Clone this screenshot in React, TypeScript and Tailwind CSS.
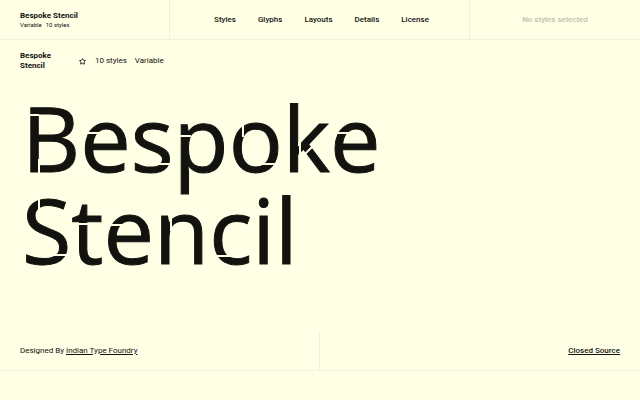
import { Star } from "lucide-react";

const NAV_LINKS = ["Styles", "Glyphs", "Layouts", "Details", "License"];

// Background-coloured strokes that break the letters of each line
const SPECIMEN = [
    {
        text: "Bespoke",
        cuts: [
            "M6 24H17",
            "M17 68V84",
            "M62 42H77",
            "M128 73H150",
            "M156 45H169",
            "M221 28V46",
            "M232 73H258",
            "M278 30V84",
            "M278 68L292 54",
            "M312 42H327",
        ],
    },
    {
        text: "Stencil",
        cuts: ["M17 11V32", "M26 72H49", "M54 41H72", "M85 42H100", "M149 28V48", "M190 73H212"],
    },
];

export default function App() {
    return (
        <main className="flex min-h-screen flex-col bg-[#ffffe5] font-['Roboto','Liberation_Sans',sans-serif] text-[8px] leading-[10px] text-[#12120f]">
            <header className="grid h-10 grid-cols-[17fr_30fr_17fr] border-b border-[#f1f1d9]">
                <div className="border-r border-[#f1f1d9] px-5 pt-[11px]">
                    <p className="font-bold">Bespoke Stencil</p>
                    <p className="flex gap-1 text-[6px] leading-[8px]">
                        <span>Variable</span>
                        <span>10 styles</span>
                    </p>
                </div>
                <nav className="flex items-center justify-center gap-[22px] border-r border-[#f1f1d9] pt-px pl-1 font-medium">
                    {NAV_LINKS.map((label) => (
                        <a key={label} href={`#${label.toLowerCase()}`}>
                            {label}
                        </a>
                    ))}
                </nav>
                <div className="flex items-center justify-center pt-px font-medium text-[#c0c0ab]">
                    No styles selected
                </div>
            </header>

            <section className="flex items-center px-5 pt-[11px]">
                <p className="w-[59px] font-bold">
                    Bespoke
                    <br />
                    Stencil
                </p>
                <button type="button" aria-label="Add to favourites">
                    <Star className="h-[7px] w-[7px]" strokeWidth={3} />
                </button>
                <span className="ml-[9px]">10 styles</span>
                <span className="ml-2">Variable</span>
            </section>

            <h1 className="px-[22px] pt-5 font-['Open_Sans','Noto_Sans',sans-serif] text-[90px] leading-[92px] font-medium [-webkit-text-stroke:1px_currentColor]">
                {SPECIMEN.map((line) => (
                    <span key={line.text} className="relative block">
                        {line.text}
                        <svg
                            aria-hidden="true"
                            viewBox="0 0 368 92"
                            className="absolute top-0 left-0 h-[92px] w-[368px] fill-none stroke-[#ffffe5] stroke-2"
                        >
                            {line.cuts.map((d) => (
                                <path key={d} d={d} />
                            ))}
                        </svg>
                    </span>
                ))}
            </h1>

            <footer className="mt-auto mb-[29px] grid h-[39px] grid-cols-2 border-b border-[#f1f1d9]">
                <p className="flex items-center border-r border-[#f1f1d9] px-5 whitespace-pre">
                    Designed By{" "}
                    <a href="#foundry" className="underline">
                        Indian Type Foundry
                    </a>
                </p>
                <p className="flex items-center justify-end px-5 font-medium">
                    <a href="#license" className="underline">
                        Closed Source
                    </a>
                </p>
            </footer>
        </main>
    );
}
